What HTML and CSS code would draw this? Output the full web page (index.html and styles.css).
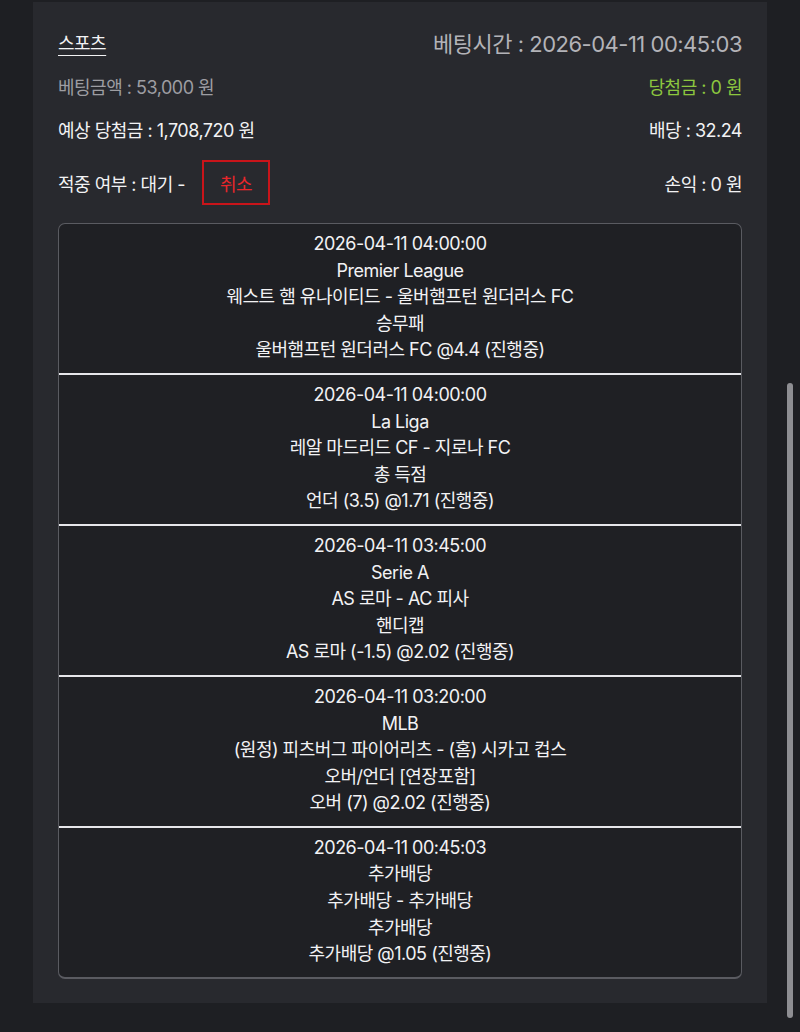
FILE: index.html
```html
<!DOCTYPE html>
<html lang="ko">
<head>
<meta charset="utf-8">
<link rel="stylesheet" href="styles.css">
</head>
<body>
<div class="panel">
  <div class="row row1">
    <span class="title">스포츠</span>
    <span class="bettime">베팅시간 : 2026-04-11 00:45:03</span>
  </div>
  <div class="row row2">
    <span class="muted">베팅금액 : 53,000 원</span>
    <span class="green">당첨금 : 0 원</span>
  </div>
  <div class="row row3">
    <span>예상 당첨금 : 1,708,720 원</span>
    <span>배당 : 32.24</span>
  </div>
  <div class="row row4">
    <div class="status"><span>적중 여부 : 대기 -</span><span class="cancel">취소</span></div>
    <span>손익 : 0 원</span>
  </div>
  <div class="box">
    <div class="entry">
      <div>2026-04-11 04:00:00</div>
      <div>Premier League</div>
      <div>웨스트 햄 유나이티드 - 울버햄프턴 원더러스 FC</div>
      <div>승무패</div>
      <div>울버햄프턴 원더러스 FC @4.4 (진행중)</div>
    </div>
    <div class="entry">
      <div>2026-04-11 04:00:00</div>
      <div>La Liga</div>
      <div>레알 마드리드 CF - 지로나 FC</div>
      <div>총 득점</div>
      <div>언더 (3.5) @1.71 (진행중)</div>
    </div>
    <div class="entry">
      <div>2026-04-11 03:45:00</div>
      <div>Serie A</div>
      <div>AS 로마 - AC 피사</div>
      <div>핸디캡</div>
      <div>AS 로마 (-1.5) @2.02 (진행중)</div>
    </div>
    <div class="entry">
      <div>2026-04-11 03:20:00</div>
      <div>MLB</div>
      <div>(원정) 피츠버그 파이어리츠 - (홈) 시카고 컵스</div>
      <div>오버/언더 [연장포함]</div>
      <div>오버 (7) @2.02 (진행중)</div>
    </div>
    <div class="entry">
      <div>2026-04-11 00:45:03</div>
      <div>추가배당</div>
      <div>추가배당 - 추가배당</div>
      <div>추가배당</div>
      <div>추가배당 @1.05 (진행중)</div>
    </div>
  </div>
</div>
<div class="scroll-thumb"></div>
</body>
</html>
```

FILE: styles.css
```css
html, body {
  margin: 0;
  padding: 0;
  background: #1e1f23;
}
body {
  font-family: Inter, "Noto Sans CJK KR", sans-serif;
  color: #f2f2f4;
  font-size: 18px;
  letter-spacing: -0.5px;
  height: 1032px;
  overflow: hidden;
}
.panel {
  margin: 2px 0 0 33px;
  width: 734px;
  box-sizing: border-box;
  background: #28292e;
  padding: 25px 25px 24px 25px;
}
.row {
  display: flex;
  justify-content: space-between;
  align-items: center;
}
.row1 { height: 30px; }
.row2 { height: 26px; margin-top: 16px; }
.row3 { height: 26px; margin-top: 17px; }
.row4 { height: 45px; margin-top: 18px; }
.title {
  text-decoration: underline;
  text-underline-offset: 5px;
  text-decoration-thickness: 1px;
  font-size: 18px;
  font-weight: 400;
}
.bettime {
  color: #b3b3b8;
  font-size: 22px;
}
.muted { color: #9d9da2; }
.green { color: #8cc63f; }
.status {
  display: flex;
  align-items: center;
  gap: 17px;
}
.cancel {
  box-sizing: border-box;
  width: 68px;
  height: 45px;
  border: 2px solid #c9141a;
  color: #e8262b;
  display: flex;
  align-items: center;
  justify-content: center;
}
.box {
  margin-top: 18px;
  border: 1px solid #5a5b61;
  border-bottom-width: 2px;
  border-radius: 7px;
  background: #1f2024;
  overflow: hidden;
}
.entry {
  text-align: center;
  line-height: 26.6px;
  padding: 7px 0 9px;
}
.entry + .entry {
  border-top: 2px solid #e6e6ea;
}
.scroll-thumb {
  position: fixed;
  left: 787px;
  top: 383px;
  width: 6px;
  height: 635px;
  border-radius: 3px;
  background: #8e8e92;
}
```
